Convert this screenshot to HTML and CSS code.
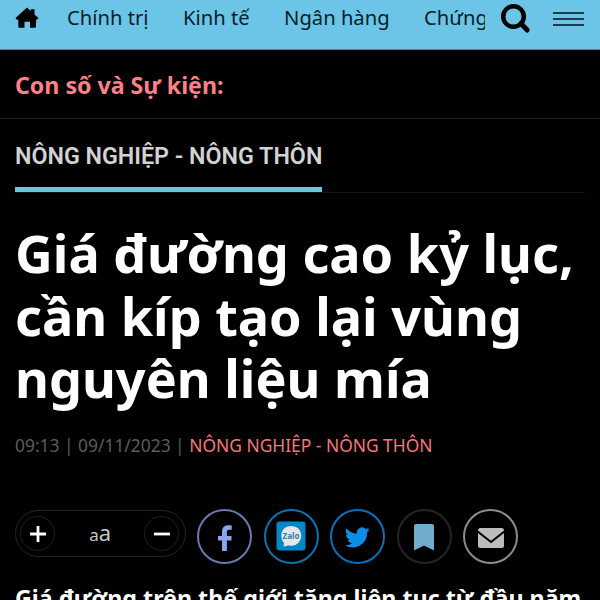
FILE: index.html
```
<!doctype html>
<html lang="vi">
	<head>
		<meta charset="utf-8">
		<title>Giá đường cao kỷ lục</title>
		<link rel="stylesheet" href="styles.css">
	</head>
	<body>
		<header class="topbar">
			<a class="home"><svg width="24" height="22" viewBox="0 0 24 22"><path d="M12 .6 15.7 4V2.200h3.800v5.200l3.900 3.700-1.400 1.700H21v6.700q0 1.300-1.300 1.300h-4.700v-6.100H9.500v6.100H4.600q-1.300 0-1.300-1.300v-6.700H1.800L.5 11.100z"/></svg></a>
			<nav class="menu">
				<a>Chính trị</a>
				<a>Kinh tế</a>
				<a>Ngân hàng</a>
				<a>Chứng khoán</a>
			</nav>
			<svg class="search" width="32" height="30" viewBox="0 0 32 30"><circle cx="13.500" cy="12.500" r="10.300"/><path d="m21 19.500 6.200 6.500" stroke-width="5"/></svg>
			<div class="burger"><i></i><i></i><i></i></div>
		</header>
		<div class="events"><span>Con số và Sự kiện:</span></div>
		<main class="article">
			<div class="category"><h2>NÔNG NGHIỆP - NÔNG THÔN</h2></div>
			<h1>Giá đường cao kỷ lục, cần kíp tạo lại vùng nguyên liệu mía</h1>
			<p class="meta">09:13 | 09/11/2023 | <a>NÔNG NGHIỆP - NÔNG THÔN</a></p>
			<div class="tools">
				<div class="fontsize">
					<button><svg width="18" height="18" viewBox="0 0 18 18"><path d="M9 1v16M1 9h16"/></svg></button>
					<span class="letters"><small>a</small>a</span>
					<button><svg width="18" height="18" viewBox="0 0 18 18"><path d="M1 9h16"/></svg></button>
				</div>
				<a class="share facebook"><svg width="16" height="28" viewBox="0 0 16 28"><path d="M5 27V16.500H1v-4.500h4V8C5 3.500 7.600 1.300 11 1.300c1.800 0 3.700.2 3.700.2v4.200h-2.100c-1.900 0-2.700.9-2.700 2.300v4h4.600v4.500H9.900V27z"/></svg></a>
				<a class="share zalo"><svg width="30" height="30" viewBox="0 0 30 30"><rect x=".5" y=".5" width="29" height="29" rx="3" fill="#0288c9"/><path d="M15 5C9.300 5 5.300 9 5.300 14.600c0 3.200 1 5.600 2.700 7.400.3 1.500-.3 2.500-1 3.300 2.100.2 3.800-.3 5.100-1.100 1.100.4 2.200.6 3.400.6 5.600 0 9.700-4.400 9.700-10.200S21 5 15 5z" fill="#e4e6e8"/><text x="15" y="18" text-anchor="middle">Zalo</text></svg></a>
				<a class="share twitter"><svg width="25" height="22" viewBox="0 0 24 21"><path d="M23.600 2.500c-.9.4-1.800.6-2.800.8 1-.6 1.800-1.500 2.100-2.600-.9.500-2 .9-3.100 1.100A4.900 4.900 0 0 0 11.500 6.300C7.400 6.100 3.900 4.200 1.500 1.300c-1.300 2.200-.6 5.100 1.500 6.500-.8 0-1.500-.2-2.200-.6 0 2.300 1.600 4.300 3.900 4.800-.7.200-1.400.2-2.200.1.600 1.900 2.400 3.300 4.600 3.400A9.900 9.900 0 0 1 0 17.500 13.900 13.900 0 0 0 21.200 5.200c1-.7 1.800-1.600 2.400-2.700z"/></svg></a>
				<a class="share bookmark"><svg width="20" height="27" viewBox="0 0 20 27"><path d="M0 26.500V2Q0 0 2 0h16q2 0 2 2v24.500l-10-5z"/></svg></a>
				<a class="share mail"><svg width="28" height="22" viewBox="0 0 28 22"><rect x="1" y="1" width="26" height="20" rx="2.500"/><path d="m0 4 14 11L28 4"/></svg></a>
			</div>
			<p class="lead">Giá đường trên thế giới tăng liên tục từ đầu năm</p>
		</main>
	</body>
</html>
```
FILE: styles.css
```
body
{
	margin: 0;
	height: 600px;
	overflow: hidden;
	background-color: #000000;
	color: #ffffff;
	font-family: "Noto Sans", sans-serif;
}

h1, h2, p
{
	margin: 0;
}

svg
{
	display: block;
}

.topbar
{
	box-sizing: border-box;
	display: flex;
	align-items: center;
	height: 50px;
	padding: 0 16px 15px 15px;
	background-color: #6cc5e7;
	border-bottom: 1px solid #408aa5;
}

.home
{
	margin: 2px 28px 0 0;
}

.menu
{
	display: flex;
	width: 418px;
	gap: 34.500px;
	overflow: hidden;
	white-space: nowrap;
	font-size: 20.200px;
	line-height: 36px;
	color: #071e28;
}

.search
{
	margin: 3px 0 0 15px;
	fill: none;
	stroke: #000000;
	stroke-width: 4.500;
	stroke-linecap: round;
}

.burger
{
	display: flex;
	flex-direction: column;
	gap: 4px;
	width: 31px;
	margin: 4px 0 0 auto;
}

.burger i
{
	height: 2px;
	background-color: #183c4b;
}

.events
{
	height: 68px;
	padding-left: 15px;
	border-bottom: 1px solid #1c1c1c;
	font-size: 23.150px;
	font-weight: 700;
	line-height: 70px;
	color: #ff8086;
}

.article
{
	padding: 0 15px;
}

.category
{
	height: 73px;
	border-bottom: 1px solid #161616;
}

.category h2
{
	box-sizing: border-box;
	display: inline-block;
	height: 73px;
	border-bottom: 5px solid #6cc5e0;
	font-family: Roboto, sans-serif;
	font-size: 23.250px;
	font-weight: 600;
	line-height: 75px;
	color: #d2d2d2;
	white-space: nowrap;
}

h1
{
	margin-top: 29px;
	font-size: 52.200px;
	font-weight: 700;
	line-height: 62.500px;
}

.meta
{
	margin-top: 21px;
	font-size: 17.400px;
	line-height: 28px;
	color: #5c5c5c;
	white-space: nowrap;
}

.meta a
{
	color: #f8767d;
}

.tools
{
	display: flex;
	margin-top: 50px;
	gap: 11.500px;
}

.fontsize
{
	box-sizing: border-box;
	display: flex;
	align-items: center;
	justify-content: space-between;
	width: 170.500px;
	height: 47px;
	padding: 1px 5px 0 4px;
	margin: 1px 0 7px;
	border: 1px solid #242424;
	border-radius: 24px;
}

.fontsize button
{
	display: flex;
	align-items: center;
	justify-content: center;
	width: 35px;
	height: 35px;
	padding: 0;
	border: 1px solid #202020;
	border-radius: 50%;
	background: none;
}

.fontsize button:last-child
{
	margin-left: -1px;
}

.fontsize svg
{
	stroke: #ffffff;
	stroke-width: 2.800;
}

.letters
{
	font-size: 22px;
	line-height: 35px;
	color: #c8c8c8;
}

.letters small
{
	font-size: 17px;
}

.share
{
	box-sizing: border-box;
	display: flex;
	align-items: center;
	justify-content: center;
	width: 55px;
	height: 55px;
	padding-top: 3px;
	border: 2px solid;
	border-radius: 50%;
}

.facebook
{
	border-color: #677aad;
	fill: #8ba4ef;
}

.zalo
{
	padding-top: 0;
	border-color: #0874b0;
}

.zalo text
{
	font-size: 8px;
	font-weight: 700;
	fill: #287fb2;
}

.twitter
{
	border-color: #0870ba;
	fill: #0a8ee8;
}

.bookmark
{
	border-color: #242424;
	fill: #71adca;
}

.mail
{
	border-color: #8c8c8c;
	fill: #bcbcbc;
}

.mail path
{
	fill: none;
	stroke: #000000;
	stroke-width: 2;
}

.lead
{
	margin-top: 17px;
	font-size: 23.250px;
	font-weight: 700;
	line-height: 34px;
	white-space: nowrap;
}
```
